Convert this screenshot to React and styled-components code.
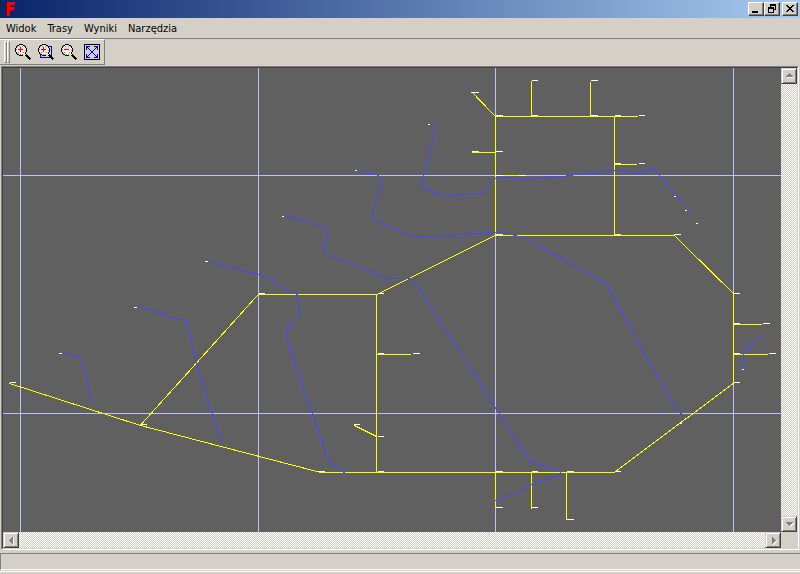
import React from "react";
import styled, { createGlobalStyle } from "styled-components";

const face = "#d4d0c8";

const GlobalStyle = createGlobalStyle`
  * {
    box-sizing: border-box;
  }
  body {
    margin: 0;
    background-color: ${face};
    font-family: "DejaVu Sans Condensed", "Liberation Sans", sans-serif;
    font-size: 11px;
    color: #000;
  }
`;

const Window = styled.div`
  min-height: 100vh;
  display: flex;
  flex-direction: column;
`;

const TitleBar = styled.header`
  height: 18px;
  padding: 0 2px 0 5px;
  display: flex;
  align-items: center;
  justify-content: space-between;
  background: linear-gradient(to right, #0a246a, #a6caf0);
`;

const Logo = styled.span`
  align-self: flex-start;
  font-family: "DejaVu Sans Mono", monospace;
  font-size: 17px;
  line-height: 20px;
  font-weight: bold;
  color: #f00;
  text-shadow: 0 -1px #f00, 1px 0 #600;
`;

const Caption = styled.div`
  display: flex;
`;

const RaisedButton = styled.button`
  padding: 0;
  display: flex;
  align-items: center;
  justify-content: center;
  background-color: ${face};
  border: 1px solid;
  border-color: #fff #404040 #404040 #fff;
  box-shadow: inset -1px -1px #808080;
`;

const CaptionButton = styled(RaisedButton)`
  width: 16px;
  height: 14px;
  margin-left: ${(props) => (props.$apart ? "2px" : "0")};
`;

const MenuBar = styled.nav`
  height: 21px;
  padding: 1px 6px 0;
  display: flex;
  align-items: center;
  gap: 11px;
  border-bottom: 1px solid #808080;
`;

const MenuItem = styled.button`
  padding: 0;
  border: none;
  background: none;
  font: inherit;
  line-height: 14px;
`;

const Toolbar = styled.div`
  align-self: flex-start;
  height: 26px;
  padding-left: 4px;
  display: flex;
  align-items: center;
  border: 1px solid;
  border-color: #fff #808080 #808080 transparent;
  border-left: none;
`;

const Grip = styled.div`
  width: 3px;
  height: 22px;
  margin-right: ${(props) => (props.$last ? "2px" : "0")};
  border: 1px solid;
  border-color: #fff #808080 #808080 #fff;
`;

const ToolButton = styled.button`
  width: 23px;
  height: 24px;
  padding: 4px 3px 0;
  display: flex;
  align-items: flex-start;
  border: none;
  background: none;
`;

const Viewport = styled.main`
  flex: 1;
  margin: 1px 1px 3px;
  display: flex;
  flex-direction: column;
  border: 1px solid;
  border-color: #808080 #fff #fff #808080;
`;

const Inner = styled.div`
  flex: 1;
  display: grid;
  grid-template-columns: 1fr 16px;
  grid-template-rows: 1fr 16px;
  border: 1px solid;
  border-color: #404040 ${face} ${face} #404040;
`;

const Map = styled.svg`
  width: 100%;
  height: 100%;
  min-height: 200px;
  display: block;
  background-color: #606060;
`;

const ScrollBar = styled.div`
  display: flex;
  flex-direction: ${(props) => (props.$vertical ? "column" : "row")};
  justify-content: space-between;
  background: repeating-conic-gradient(#fff 0 25%, ${face} 0 50%) 0 0 / 2px 2px;
`;

const ScrollButton = styled(RaisedButton)`
  width: 16px;
  height: 16px;
  border-color: ${face} #404040 #404040 ${face};
  box-shadow: inset 1px 1px #fff, inset -1px -1px #808080;
`;

const StatusBar = styled.footer`
  height: 17px;
  margin-bottom: 1px;
  border: 1px solid;
  border-color: #808080 #fff #fff #808080;
  border-right: none;
`;

const BottomEdge = styled.div`
  height: 3px;
  border-top: 1px solid #fff;
`;

const gridX = [20, 258, 495, 733];
const gridY = [175, 413];

const roads = [
  "9,383 140,425 320,472 614,472 733,383 733,293 674,235 495,235 377,294 258,294 140,425",
  "376,294 376,472",
  "376,354 411,354",
  "354,425 376,436",
  "472,92 495,116 638,116",
  "495,116 495,235",
  "531,81 531,116",
  "590,82 590,116",
  "614,116 614,235",
  "614,164 637,164",
  "472,152 495,152",
  "503,175 519,175",
  "495,472 495,508",
  "531,472 531,509",
  "566,472 566,520",
  "733,324 762,324",
  "733,354 768,354",
];

const routes = [
  "432,124 435,127 435,132 430,148 425,171 421,181 422,186 430,190 438,194 450,195 457,195 460,194 475,194 483,192 487,187 491,181 496,178 507,177 521,179 533,179 540,178 563,176 583,173 607,171 620,170 633,172 643,172 650,168 653,168 659,175 663,180 674,193 685,205",
  "688,210 691,214",
  "357,169 367,172 378,175 381,178 381,182 377,198 372,215 374,220 388,226 407,234 417,237 420,236 438,236 458,234 477,233 497,232 515,235 522,237 543,248 600,280 603,281 609,288 625,318 643,352 662,383 676,409 680,413 683,414",
  "685,420 681,423",
  "285,216 295,218 303,220 325,227 327,231 326,238 323,250 327,254 347,262 370,271 387,278 411,278 414,281 428,303 450,337 477,378 495,407 510,431 530,461 542,465 548,466 560,471 560,473 555,476 532,484 515,494 508,495 498,499 493,501",
  "207,261 220,264 233,268 258,274 270,277 277,285 297,294 298,300 299,315 286,329 286,333 288,343 293,358 300,377 303,390 312,413 322,443 329,462 337,467 348,475",
  "137,307 145,308 157,312 173,318 186,320 196,363 213,417 222,443",
  "62,352 72,355 80,358 82,360 87,382 92,403",
  "761,336 752,344 744,352 743,358 745,369",
];

// x, y, length
const ticks = [
  [471, 92, 8], [532, 80, 6], [591, 80, 7], [496, 115, 7], [532, 115, 6],
  [591, 115, 7], [615, 115, 6], [639, 115, 6], [472, 151, 7], [496, 151, 7],
  [615, 163, 6], [639, 163, 6], [496, 175, 7], [519, 175, 7], [496, 234, 7],
  [615, 234, 6], [674, 234, 7], [428, 124, 2], [355, 170, 2], [282, 216, 2],
  [205, 261, 3], [134, 307, 3], [59, 353, 3], [10, 382, 6], [140, 424, 7],
  [259, 293, 6], [378, 293, 6], [378, 353, 6], [413, 353, 7], [354, 424, 6],
  [378, 436, 6], [318, 471, 7], [378, 471, 6], [496, 471, 7], [532, 471, 6],
  [567, 471, 7], [615, 471, 6], [496, 507, 7], [532, 507, 6], [567, 519, 7],
  [734, 293, 6], [734, 323, 6], [763, 323, 7], [734, 353, 6], [769, 353, 7],
  [734, 382, 6], [742, 369, 2], [679, 423, 3], [674, 196, 2], [685, 210, 2],
  [696, 223, 2],
];

const NetworkMap = () => (
  <Map role="img" aria-label="Trasy" shapeRendering="crispEdges">
    <g transform="translate(-3 -68)">
      {gridX.map((x) => (
        <rect key={x} x={x} y="0" width="1" height="4000" fill="#c0c0ff" />
      ))}
      {gridY.map((y) => (
        <rect key={y} x="0" y={y} width="4000" height="1" fill="#c0c0ff" />
      ))}
      <g transform="translate(0.3 0.4)" fill="none">
        {roads.map((points) => (
          <polyline key={points} points={points} stroke="#ff0" />
        ))}
        {routes.map((points) => (
          <polyline key={points} points={points} stroke="#4848ff" />
        ))}
      </g>
      {ticks.map(([x, y, width]) => (
        <rect key={`${x}-${y}`} x={x} y={y} width={width} height="1" fill="#fff" />
      ))}
    </g>
  </Map>
);

const Magnifier = ({ minus, area }) => (
  <svg width="17" height="17" shapeRendering="crispEdges">
    {area && <path d="M2.5 11v2.5h11v-11H10" fill="none" stroke="#00f" />}
    <path d="M4 1h4v1h2v2h1v4h-1v2H8v1H4v-1H2V8H1V4h1V2h2z" fill="#e8e8e8" />
    <path
      d="M4 0h4v1H4zM2 1h2v1H2zM8 1h2v1H8zM1 2h1v2H1zM10 2h1v2h-1zM0 4h1v4H0zM11 4h1v4h-1zM1 8h1v2H1zM10 8h1v2h-1zM2 10h2v1H2zM8 10h2v1H8zM4 11h4v1H4z"
      fill="#000"
    />
    <path
      d="M2 2h1v1H2zM9 2h1v1H9zM2 9h1v1H2zM4 2h1v1H4zM7 2h1v1H7zM3 8h1v1H3zM8 8h1v1H8zM5 10h1v1H5zM7 10h1v1H7zM1 5h1v1H1zM10 6h1v1h-1z"
      fill="#909090"
    />
    <path d={minus ? "M3 5h5v1H3z" : "M3 5h5v1H3zM5 3h1v5H5z"} fill="#f00" />
    <path d="M9 9h1v1h1v1h-1v1H9v-1H8v-1h1z" fill="#ff0" />
    <path d="M11 10h1v1h1v1h1v1h1v1h1v1h-1v1h-1v-1h-1v-1h-1v-1h-1v-1h-1v-1h1z" fill="#000" />
  </svg>
);

const FitIcon = () => (
  <svg width="17" height="17" shapeRendering="crispEdges">
    <rect x="0.5" y="0.5" width="15" height="15" fill="none" stroke="#000" />
    <path
      d="M2 2h4v1H3v3H2zM10 2h4v4h-1V3h-3zM2 10h1v3h3v1H2zM13 10h1v4h-4v-1h3z"
      fill="#00f"
    />
    <path
      d="M3 3h1v1H3zM4 4h1v1H4zM5 5h1v1H5zM6 6h1v1H6zM7 7h2v2H7zM9 9h1v1H9zM10 10h1v1h-1zM11 11h1v1h-1zM12 12h1v1h-1zM12 3h1v1h-1zM11 4h1v1h-1zM10 5h1v1h-1zM9 6h1v1H9zM6 9h1v1H6zM5 10h1v1H5zM4 11h1v1H4zM3 12h1v1H3z"
      fill="#00f"
    />
  </svg>
);

const arrows = {
  up: "M4 1h1v1h1v1h1v1h1v1H1V4h1V3h1V2h1z",
  down: "M1 2h7v1H7v1H6v1H5v1H4V5H3V4H2V3H1z",
  left: "M5 1h1v7H5V7H4V6H3V5H2V4h1V3h1V2h1z",
  right: "M3 1h1v1h1v1h1v1h1v1H6v1H5v1H4v1H3z",
};

const Arrow = ({ to }) => (
  <svg width="9" height="9" shapeRendering="crispEdges">
    <path d={arrows[to]} fill="#fff" transform="translate(1 1)" />
    <path d={arrows[to]} fill="#808080" />
  </svg>
);

const App = () => {
  return (
    <>
      <GlobalStyle />
      <Window>
        <TitleBar>
          <Logo>F</Logo>
          <Caption>
            <CaptionButton aria-label="Minimize">
              <svg width="10" height="10" shapeRendering="crispEdges">
                <path d="M1 7h6v2H1z" />
              </svg>
            </CaptionButton>
            <CaptionButton aria-label="Restore">
              <svg width="10" height="10" shapeRendering="crispEdges">
                <path d="M3 0h6v6H7V5h1V2H4v1H3zM1 3h6v6H1zM2 5v3h4V5z" fillRule="evenodd" />
              </svg>
            </CaptionButton>
            <CaptionButton $apart aria-label="Close">
              <svg width="10" height="10" shapeRendering="crispEdges">
                <path d="M1 1h2v1h1v1h2V2h1V1h2v1H8v1H7v1H6v1h1v1h1v1h1v1H7V7H6V6H4v1H3v1H1V7h1V6h1V5h1V4H3V3H2V2H1z" />
              </svg>
            </CaptionButton>
          </Caption>
        </TitleBar>
        <MenuBar>
          <MenuItem>Widok</MenuItem>
          <MenuItem>Trasy</MenuItem>
          <MenuItem>Wyniki</MenuItem>
          <MenuItem>Narzędzia</MenuItem>
        </MenuBar>
        <Toolbar>
          <Grip />
          <Grip $last />
          <ToolButton aria-label="Zoom in">
            <Magnifier />
          </ToolButton>
          <ToolButton aria-label="Zoom area">
            <Magnifier area />
          </ToolButton>
          <ToolButton aria-label="Zoom out">
            <Magnifier minus />
          </ToolButton>
          <ToolButton aria-label="Fit to window">
            <FitIcon />
          </ToolButton>
        </Toolbar>
        <Viewport>
          <Inner>
            <NetworkMap />
            <ScrollBar $vertical>
              <ScrollButton aria-label="Scroll up">
                <Arrow to="up" />
              </ScrollButton>
              <ScrollButton aria-label="Scroll down">
                <Arrow to="down" />
              </ScrollButton>
            </ScrollBar>
            <ScrollBar>
              <ScrollButton aria-label="Scroll left">
                <Arrow to="left" />
              </ScrollButton>
              <ScrollButton aria-label="Scroll right">
                <Arrow to="right" />
              </ScrollButton>
            </ScrollBar>
          </Inner>
        </Viewport>
        <StatusBar />
        <BottomEdge />
      </Window>
    </>
  );
};

export default App;
